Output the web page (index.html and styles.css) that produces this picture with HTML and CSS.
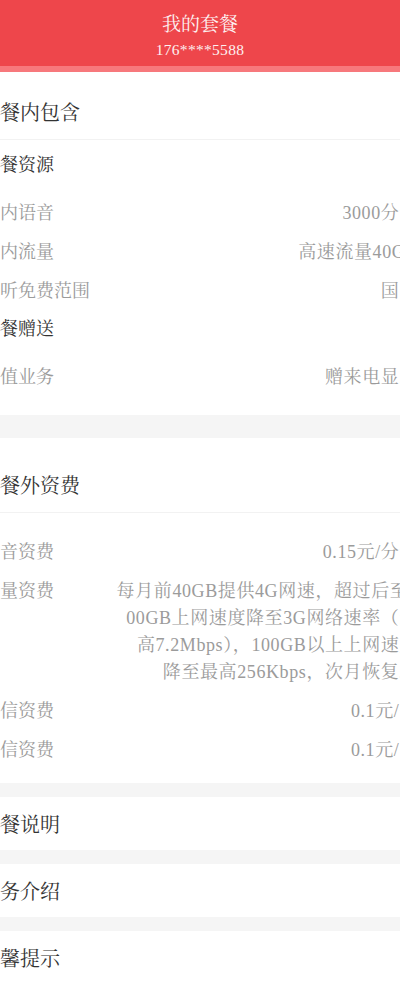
FILE: index.html
```html
<!DOCTYPE html>
<html lang="zh-CN">
<head>
    <meta charset="UTF-8">
    <meta name="viewport" content="width=device-width, initial-scale=1.0">
    <title>我的套餐</title>
    <link rel="stylesheet" href="styles.css">
</head>
<body>
    <div class="page-header">
        <h1>我的套餐</h1>
        <p>176****5588</p>
    </div>

    <div class="page-content">
        <div class="section">
            <div class="section-title first">套餐内包含</div>
            <div class="section-body">
                <div class="group-title">套餐资源</div>
                <div class="info-row"><span class="label">国内语音</span><span class="value">3000分钟</span></div>
                <div class="info-row"><span class="label">国内流量</span><span class="value">高速流量40GB</span></div>
                <div class="info-row"><span class="label">接听免费范围</span><span class="value">国内</span></div>

                <div class="group-title">套餐赠送</div>
                <div class="info-row"><span class="label">增值业务</span><span class="value">赠来电显示</span></div>
            </div>
        </div>

        <div class="gap"></div>

        <div class="section">
            <div class="section-title">套餐外资费</div>
            <div class="section-body spaced">
                <div class="info-row"><span class="label">语音资费</span><span class="value">0.15元/分钟</span></div>
                <div class="info-row"><span class="label">流量资费</span><span class="value">每月前40GB提供4G网速，超过后至1<br>00GB上网速度降至3G网络速率（最<br>高7.2Mbps），100GB以上上网速度<br>降至最高256Kbps，次月恢复。</span></div>
                <div class="info-row"><span class="label">短信资费</span><span class="value">0.1元/条</span></div>
                <div class="info-row"><span class="label">彩信资费</span><span class="value">0.1元/条</span></div>
            </div>
        </div>

        <div class="gap small"></div>
        <div class="link-row">
            <span>套餐说明</span>
            <svg class="arrow" width="12" height="14" viewBox="0 0 12 14"><path d="M2 1l7 6-7 6" fill="none" stroke="#ddd" stroke-width="1.5"/></svg>
        </div>
        <div class="gap small"></div>
        <div class="link-row">
            <span>业务介绍</span>
            <svg class="arrow" width="12" height="14" viewBox="0 0 12 14"><path d="M2 1l7 6-7 6" fill="none" stroke="#ddd" stroke-width="1.5"/></svg>
        </div>
        <div class="gap small"></div>
        <div class="link-row">
            <span>温馨提示</span>
            <svg class="arrow" width="12" height="14" viewBox="0 0 12 14"><path d="M2 1l7 6-7 6" fill="none" stroke="#ddd" stroke-width="1.5"/></svg>
        </div>
    </div>
</body>
</html>
```

FILE: styles.css
```css
* {
    margin: 0;
    padding: 0;
    box-sizing: border-box;
    font-family: 'Liberation Serif', 'Noto Serif CJK SC', 'Noto Sans CJK SC', serif;
}

body {
    background-color: #fff;
    color: #333;
    overflow-x: hidden;
}

.page-header {
    height: 72px;
    background-color: #ee464b;
    border-bottom: 6px solid #f7787c;
    color: #fdf0f0;
    text-align: center;
    padding-top: 13px;
}

.page-header h1 {
    font-size: 19px;
    font-weight: normal;
    line-height: 24px;
}

.page-header p {
    font-size: 15.5px;
    line-height: 22px;
    margin-top: 2px;
    letter-spacing: 0.3px;
}

.page-content {
    margin: 0 -33px;
}

.section-title {
    font-size: 20px;
    line-height: 28px;
    padding: 34px 15px 12px 13px;
    border-bottom: 1px solid #f2f2f2;
}

.section-title.first {
    padding-top: 27px;
}

.section-body {
    padding: 7px 0 18px;
}

.section-body.spaced {
    padding: 20px 0 13px;
}

.group-title {
    font-size: 18px;
    line-height: 27px;
    padding: 5px 15px 15px;
    color: #333;
}

.info-row {
    display: flex;
    justify-content: space-between;
    align-items: flex-start;
    padding: 6px 15px;
    font-size: 18px;
    line-height: 27px;
    color: #9b9b9b;
}

.info-row .label {
    flex: none;
    white-space: nowrap;
}

.info-row .value {
    flex: 1;
    text-align: right;
    white-space: nowrap;
    margin-left: 20px;
    letter-spacing: 0.6px;
}

.gap {
    height: 23px;
    background-color: #f5f5f5;
}

.gap.small {
    height: 14px;
}

.link-row {
    height: 53px;
    display: flex;
    align-items: center;
    justify-content: space-between;
    padding: 0 7px 0 13px;
    font-size: 20px;
    color: #333;
}

.arrow {
    flex: none;
}
```
